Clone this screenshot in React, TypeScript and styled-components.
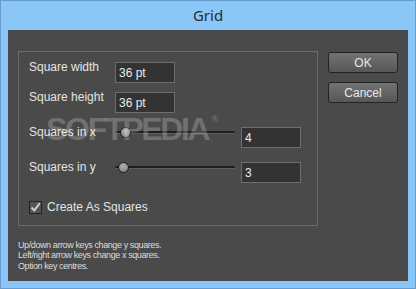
import React from "react";
import styled, { createGlobalStyle } from "styled-components";

const Global = createGlobalStyle`
  html, body {
    margin: 0;
    padding: 0;
    background: #8ac6f8;
  }
`;

const Window = styled.div`
  box-sizing: border-box;
  width: 416px;
  height: 289px;
  border: 1px solid #6a9bcf;
  background: #8ac6f8;
  display: flex;
  flex-direction: column;
  font-family: "Liberation Sans", Arial, sans-serif;
`;

const TitleBar = styled.div`
  height: 29px;
  display: flex;
  align-items: center;
  justify-content: center;
  font-family: "Noto Sans", "Open Sans", sans-serif;
  font-size: 15px;
  color: #2b2b2b;
  padding-bottom: 1px;
  box-sizing: border-box;
`;

const Client = styled.div`
  position: relative;
  box-sizing: border-box;
  margin: 0 7px 7px 7px;
  height: 251px;
  background: #4a4a4a;
  padding: 21px 0 0 10px;
  display: flex;
  flex-direction: column;
`;

const TopRow = styled.div`
  display: flex;
  align-items: flex-start;
`;

const Group = styled.div`
  box-sizing: border-box;
  width: 300px;
  height: 175px;
  border: 1px solid #6c6c6c;
  padding: 10px 0 0 10px;
  display: flex;
  flex-direction: column;
`;

const Row = styled.div<{ $mt: number }>`
  display: flex;
  align-items: flex-start;
  margin-top: ${(p) => p.$mt}px;
`;

const Label = styled.div`
  width: 86px;
  font-size: 12px;
  line-height: 14px;
  color: #e4e4e4;
  margin-top: -2px;
  white-space: nowrap;
`;

const Field = styled.div`
  box-sizing: border-box;
  width: 60px;
  height: 21px;
  border: 1px solid #6e6e6e;
  background: #333333;
  color: #ececec;
  font-size: 12px;
  padding-left: 3px;
  display: flex;
  align-items: center;
  padding-top: 1px;
`;

const Slider = styled.div`
  position: relative;
  width: 120px;
  height: 21px;
  margin-right: 6px;
`;

const Track = styled.div`
  position: absolute;
  left: 0;
  right: 0;
  top: 4px;
  height: 2px;
  background: #1e1e1e;
  border-bottom: 1px solid #5e5e5e;
  border-radius: 2px;
`;

const Thumb = styled.div<{ $pos: number }>`
  position: absolute;
  top: 0;
  left: ${(p) => p.$pos}px;
  box-sizing: border-box;
  width: 11px;
  height: 11px;
  border-radius: 50%;
  border: 1px solid #1c1c1c;
  background: radial-gradient(circle at 45% 35%, #b4b4b4, #858585 70%);
`;

const CheckRow = styled.div`
  display: flex;
  align-items: center;
  margin-top: 17px;
  gap: 5px;
`;

const Box = styled.div`
  box-sizing: border-box;
  width: 13px;
  height: 13px;
  border: 1px solid #222;
  background: #555;
  display: flex;
  align-items: center;
  justify-content: center;
`;

const CheckText = styled.span`
  font-size: 12px;
  color: #e4e4e4;
`;

const Buttons = styled.div`
  display: flex;
  flex-direction: column;
  gap: 9px;
  margin-left: 10px;
  margin-top: 1px;
`;

const Button = styled.div`
  box-sizing: border-box;
  width: 70px;
  height: 21px;
  border: 1px solid #232323;
  border-radius: 3px;
  background: linear-gradient(#727272, #575757);
  color: #e8e8e8;
  font-size: 12px;
  display: flex;
  align-items: center;
  justify-content: center;
`;

const Footer = styled.div`
  margin-top: 14px;
  font-size: 9px;
  line-height: 10.3px;
  letter-spacing: -0.4px;
  color: #dcdcdc;
`;

const Watermark = styled.div`
  position: absolute;
  left: 38px;
  top: 81px;
  font-family: "Liberation Sans", Arial, sans-serif;
  font-weight: bold;
  font-size: 32px;
  letter-spacing: -2.3px;
  color: rgba(255, 255, 255, 0.22);
  pointer-events: none;
  sup {
    font-size: 9px;
    letter-spacing: 0;
    vertical-align: top;
    margin-left: 3px;
    position: relative;
    top: 3px;
  }
`;

const sliders = [
  { label: "Squares in x", value: 4 },
  { label: "Squares in y", value: 3 },
];

export default function App() {
  return (
    <>
      <Global />
      <Window>
        <TitleBar>Grid</TitleBar>
        <Client>
          <TopRow>
            <Group>
              <Row $mt={0}>
                <Label>Square width</Label>
                <Field>36 pt</Field>
              </Row>
              <Row $mt={9}>
                <Label>Square height</Label>
                <Field>36 pt</Field>
              </Row>
              {sliders.map((s) => (
                <Row $mt={14} key={s.label}>
                  <Label>{s.label}</Label>
                  <Slider>
                    <Track />
                    <Thumb $pos={s.value * 2.1 - 3} />
                  </Slider>
                  <Field>{s.value}</Field>
                </Row>
              ))}
              <CheckRow>
                <Box>
                  <svg width="11" height="11" viewBox="0 0 11 11">
                    <path d="M1.5 5.5 L4.3 8.5 L9.8 1.2" fill="none" stroke="#d0d0d0" strokeWidth="2" />
                  </svg>
                </Box>
                <CheckText>Create As Squares</CheckText>
              </CheckRow>
            </Group>
            <Buttons>
              <Button>OK</Button>
              <Button>Cancel</Button>
            </Buttons>
          </TopRow>
          <Footer>
            Up/down arrow keys change y squares.
            <br />
            Left/right arrow keys change x squares.
            <br />
            Option key centres.
          </Footer>
          <Watermark>
            SOFTPEDIA<sup>®</sup>
          </Watermark>
        </Client>
      </Window>
    </>
  );
}
